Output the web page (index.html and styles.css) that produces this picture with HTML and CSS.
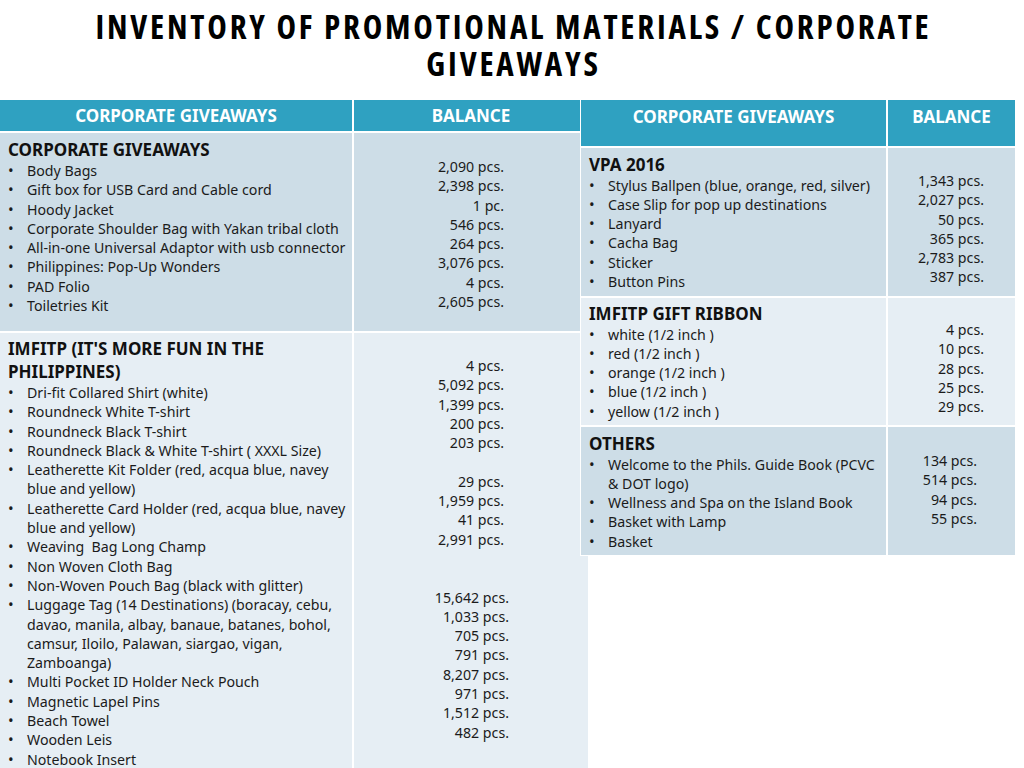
FILE: index.html
```html
<!DOCTYPE html>
<html lang="en">
<head>
  <meta charset="UTF-8" />
  <meta name="viewport" content="width=device-width, initial-scale=1.0"/>
  <title>Inventory of Promotional Materials</title>
  <link rel="stylesheet" href="styles.css">
</head>
<body>
  <h1 class="title">INVENTORY OF PROMOTIONAL MATERIALS / CORPORATE GIVEAWAYS</h1>

  <div class="sheets">
    <!-- left table -->
    <div class="sheet sheet-left">
      <div class="head">CORPORATE GIVEAWAYS</div>
      <div class="head">BALANCE</div>

      <div class="cell dark pad-a">
        <h2>CORPORATE GIVEAWAYS</h2>
        <ul>
          <li>Body Bags</li>
          <li>Gift box for USB Card and Cable cord</li>
          <li>Hoody Jacket</li>
          <li>Corporate Shoulder Bag with Yakan tribal cloth</li>
          <li>All-in-one Universal Adaptor with usb connector</li>
          <li>Philippines: Pop-Up Wonders</li>
          <li>PAD Folio</li>
          <li>Toiletries Kit</li>
        </ul>
      </div>
      <div class="cell dark qty qty-l1">
        <div>2,090 pcs.</div>
        <div>2,398 pcs.</div>
        <div>1 pc.</div>
        <div>546 pcs.</div>
        <div>264 pcs.</div>
        <div>3,076 pcs.</div>
        <div>4 pcs.</div>
        <div>2,605 pcs.</div>
      </div>

      <div class="cell light pad-b">
        <h2>IMFITP (IT'S MORE FUN IN THE PHILIPPINES)</h2>
        <ul>
          <li>Dri-fit Collared Shirt (white)</li>
          <li>Roundneck White T-shirt</li>
          <li>Roundneck Black T-shirt</li>
          <li>Roundneck Black &amp; White T-shirt ( XXXL Size)</li>
          <li>Leatherette Kit Folder (red, acqua blue, navey blue and yellow)</li>
          <li>Leatherette Card Holder (red, acqua blue, navey blue and yellow)</li>
          <li>Weaving&nbsp; Bag Long Champ</li>
          <li>Non Woven Cloth Bag</li>
          <li>Non-Woven Pouch Bag (black with glitter)</li>
          <li>Luggage Tag (14 Destinations) (boracay, cebu, davao, manila, albay, banaue, batanes, bohol, camsur, Iloilo, Palawan, siargao, vigan, Zamboanga)</li>
          <li>Multi Pocket ID Holder Neck Pouch</li>
          <li>Magnetic Lapel Pins</li>
          <li>Beach Towel</li>
          <li>Wooden Leis</li>
          <li>Notebook Insert</li>
        </ul>
      </div>
      <div class="cell light qty qty-l2">
        <div>4 pcs.</div>
        <div>5,092 pcs.</div>
        <div>1,399 pcs.</div>
        <div>200 pcs.</div>
        <div>203 pcs.</div>
        <div>&nbsp;</div>
        <div>29 pcs.</div>
        <div>1,959 pcs.</div>
        <div>41 pcs.</div>
        <div>2,991 pcs.</div>
        <div>&nbsp;</div>
        <div>&nbsp;</div>
        <div class="nudge">
          <div>15,642 pcs.</div>
          <div>1,033 pcs.</div>
          <div>705 pcs.</div>
          <div>791 pcs.</div>
          <div>8,207 pcs.</div>
          <div>971 pcs.</div>
          <div>1,512 pcs.</div>
          <div>482 pcs.</div>
        </div>
      </div>
    </div>

    <!-- right table, laid over the edge of the left one -->
    <div class="sheet sheet-right">
      <div class="head tall">CORPORATE GIVEAWAYS</div>
      <div class="head tall">BALANCE</div>

      <div class="cell dark row-vpa">
        <h2>VPA 2016</h2>
        <ul>
          <li>Stylus Ballpen (blue, orange, red, silver)</li>
          <li>Case Slip for pop up destinations</li>
          <li>Lanyard</li>
          <li>Cacha Bag</li>
          <li>Sticker</li>
          <li>Button Pins</li>
        </ul>
      </div>
      <div class="cell dark qty qty-r1">
        <div>1,343 pcs.</div>
        <div>2,027 pcs.</div>
        <div>50 pcs.</div>
        <div>365 pcs.</div>
        <div>2,783 pcs.</div>
        <div>387 pcs.</div>
      </div>

      <div class="cell light row-ribbon">
        <h2>IMFITP GIFT RIBBON</h2>
        <ul>
          <li>white (1/2 inch )</li>
          <li>red (1/2 inch )</li>
          <li>orange (1/2 inch )</li>
          <li>blue (1/2 inch )</li>
          <li>yellow (1/2 inch )</li>
        </ul>
      </div>
      <div class="cell light qty qty-r2">
        <div>4 pcs.</div>
        <div>10 pcs.</div>
        <div>28 pcs.</div>
        <div>25 pcs.</div>
        <div>29 pcs.</div>
      </div>

      <div class="cell dark row-others">
        <h2>OTHERS</h2>
        <ul>
          <li>Welcome to the Phils. Guide Book (PCVC &amp; DOT logo)</li>
          <li>Wellness and Spa on the Island Book</li>
          <li>Basket with Lamp</li>
          <li>Basket</li>
        </ul>
      </div>
      <div class="cell dark qty qty-r3">
        <div>134 pcs.</div>
        <div>514 pcs.</div>
        <div>94 pcs.</div>
        <div>55 pcs.</div>
      </div>
    </div>
  </div>
</body>
</html>
```

FILE: styles.css
```css
:root {
  --head: #2fa1c1;
  --dark: #cddde7;
  --light: #e6eef4;
  --ink: #1b1b1b;
}

* {
  margin: 0;
  padding: 0;
  box-sizing: border-box;
}

html, body {
  height: 100%;
  overflow: hidden;
}

body {
  background: #fff;
  color: var(--ink);
  font-family: 'Noto Sans', 'Open Sans', sans-serif;
  font-size: 14.2px;
}

.title {
  height: 99px;
  padding: 8px 80px 0 83px;
  font-family: 'Open Sans', 'Noto Sans', sans-serif;
  font-size: 33px;
  font-stretch: 75%;
  font-weight: 700;
  letter-spacing: 2.8px;
  line-height: 37px;
  text-align: center;
  color: #000;
}

.sheets {
  display: flex;
  align-items: flex-start;
}

.sheet {
  display: grid;
  gap: 2px;
  background: #fff;
  padding-top: 1px;
}

.sheet-left {
  width: 588px;
  grid-template-columns: 352px 234px;
  grid-template-rows: 31px 198px auto;
}

.sheet-right {
  position: relative;
  z-index: 1;
  width: 436px;
  margin-left: -8px;
  padding-left: 1px;
  padding-bottom: 1px;
  grid-template-columns: 305px 127px;
  grid-template-rows: 46px 148px 127px 128px;
}

.head {
  display: flex;
  align-items: center;
  justify-content: center;
  background: var(--head);
  color: #fff;
  font-size: 17px;
  font-weight: 700;
  padding-bottom: 1px;
}

.head.tall {
  padding-bottom: 14px;
}

.cell {
  padding: 5px 4px 0 8px;
}

.dark { background: var(--dark); }
.light { background: var(--light); }

.cell h2 {
  font-size: 17px;
  font-weight: 700;
  line-height: 23px;
  color: #111;
}

.cell ul {
  list-style: none;
}

.cell li {
  display: flex;
  line-height: 19.3px;
}

.cell li::before {
  content: "\2022";
  flex: 0 0 19px;
  font-size: 15px;
}

.pad-a { padding-top: 5px; }
.pad-b { padding-top: 4px; min-height: 480px; }

.row-vpa { padding-top: 4.5px; padding-right: 8px; }
.row-ribbon { padding-top: 3.5px; padding-right: 8px; }
.row-others { padding-top: 4.5px; padding-right: 8px; }

.qty {
  text-align: right;
  line-height: 19.3px;
}

.qty-l1 { padding: 24px 84px 0 0; }
.qty-l2 { padding: 23px 84px 0 0; }
.qty-l2 .nudge { margin-right: -5px; }

.qty-r1 { padding: 23px 31px 0 0; }
.qty-r2 { padding: 22px 31px 0 0; }
.qty-r3 { padding: 24px 38px 0 0; }
```
